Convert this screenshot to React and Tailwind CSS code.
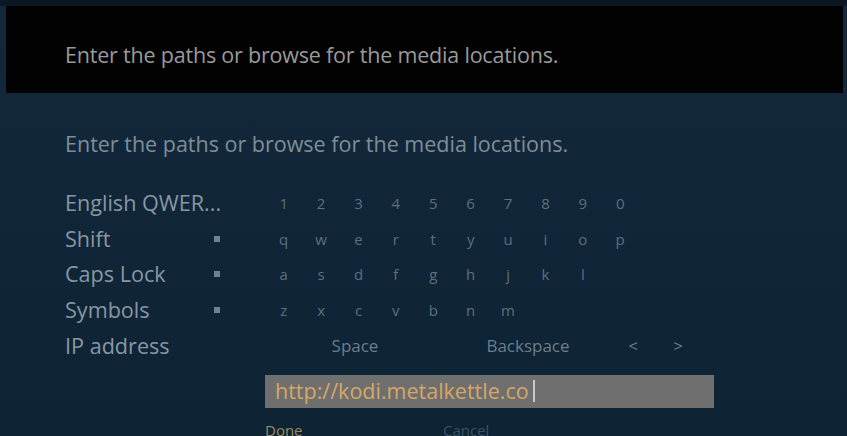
const NUMBERS = ['1', '2', '3', '4', '5', '6', '7', '8', '9', '0']
const ROWS = [
  { label: 'English QWER...', keys: NUMBERS, toggle: false },
  { label: 'Shift', keys: ['q', 'w', 'e', 'r', 't', 'y', 'u', 'i', 'o', 'p'], toggle: true },
  { label: 'Caps Lock', keys: ['a', 's', 'd', 'f', 'g', 'h', 'j', 'k', 'l'], toggle: true },
  { label: 'Symbols', keys: ['z', 'x', 'c', 'v', 'b', 'n', 'm'], toggle: true },
]

function KeyRow({ label, keys, toggle }) {
  return (
    <div className="flex h-[35.7px] items-center">
      <div className="w-[149px] whitespace-nowrap text-[21.6px] text-[#8797a4]">{label}</div>
      <div className="w-[6px]">
        {toggle && <div className="h-[6px] w-[6px] bg-[#6f8292]" />}
      </div>
      <div className="w-[45px]" />
      <div className="flex">
        {keys.map((k) => (
          <div key={k} className="w-[37.4px] text-center text-[15px] text-[#5b7080]">
            {k}
          </div>
        ))}
      </div>
    </div>
  )
}

export default function App() {
  return (
    <div
      className="h-[436px] w-[847px] overflow-hidden bg-gradient-to-b from-[#13293b] to-[#0e2334]"
      style={{ fontFamily: '"Open Sans", "Noto Sans", sans-serif' }}
    >
      <div className="h-[6px] bg-[#0b1824]" />
      <div className="ml-[6px] mr-[4px] flex h-[87px] items-center bg-[#020202] pb-[1px] pl-[59px] pt-[12px]">
        <span className="text-[21.5px] tracking-[-0.2px] text-[#9a9a9a]">
          Enter the paths or browse for the media locations.
        </span>
      </div>

      <div className="pl-[65px]">
        <div className="mt-[35px] text-[21.5px] text-[#7f8e9a]">
          Enter the paths or browse for the media locations.
        </div>

        <div className="mt-[25px]">
          {ROWS.map((row) => (
            <KeyRow key={row.label} {...row} />
          ))}
          <div className="flex h-[35.7px] items-center">
            <div className="w-[200px] text-[21.6px] text-[#8797a4]">IP address</div>
            <div className="flex text-[17px] text-[#6a7e8d]">
              <div className="w-[180px] text-center">Space</div>
              <div className="w-[166px] text-center">Backspace</div>
              <div className="w-[44px] text-center">&lt;</div>
              <div className="w-[46px] text-center">&gt;</div>
            </div>
          </div>
        </div>

        <div className="ml-[200px] mt-[11px] flex h-[33px] w-[449px] items-center bg-[#6f6f6f] pl-[10px]">
          <span className="text-[21.5px] text-[#d6a765]">http://kodi.metalkettle.co</span>
          <span className="ml-[4px] h-[22px] w-[2px] bg-[#c8c8c8]" />
        </div>

        <div className="ml-[200px] mt-[11px] flex text-[15px]">
          <span className="w-[178px] text-[#9c8a62]">Done</span>
          <span className="text-[#3c5263]">Cancel</span>
        </div>
      </div>
    </div>
  )
}
